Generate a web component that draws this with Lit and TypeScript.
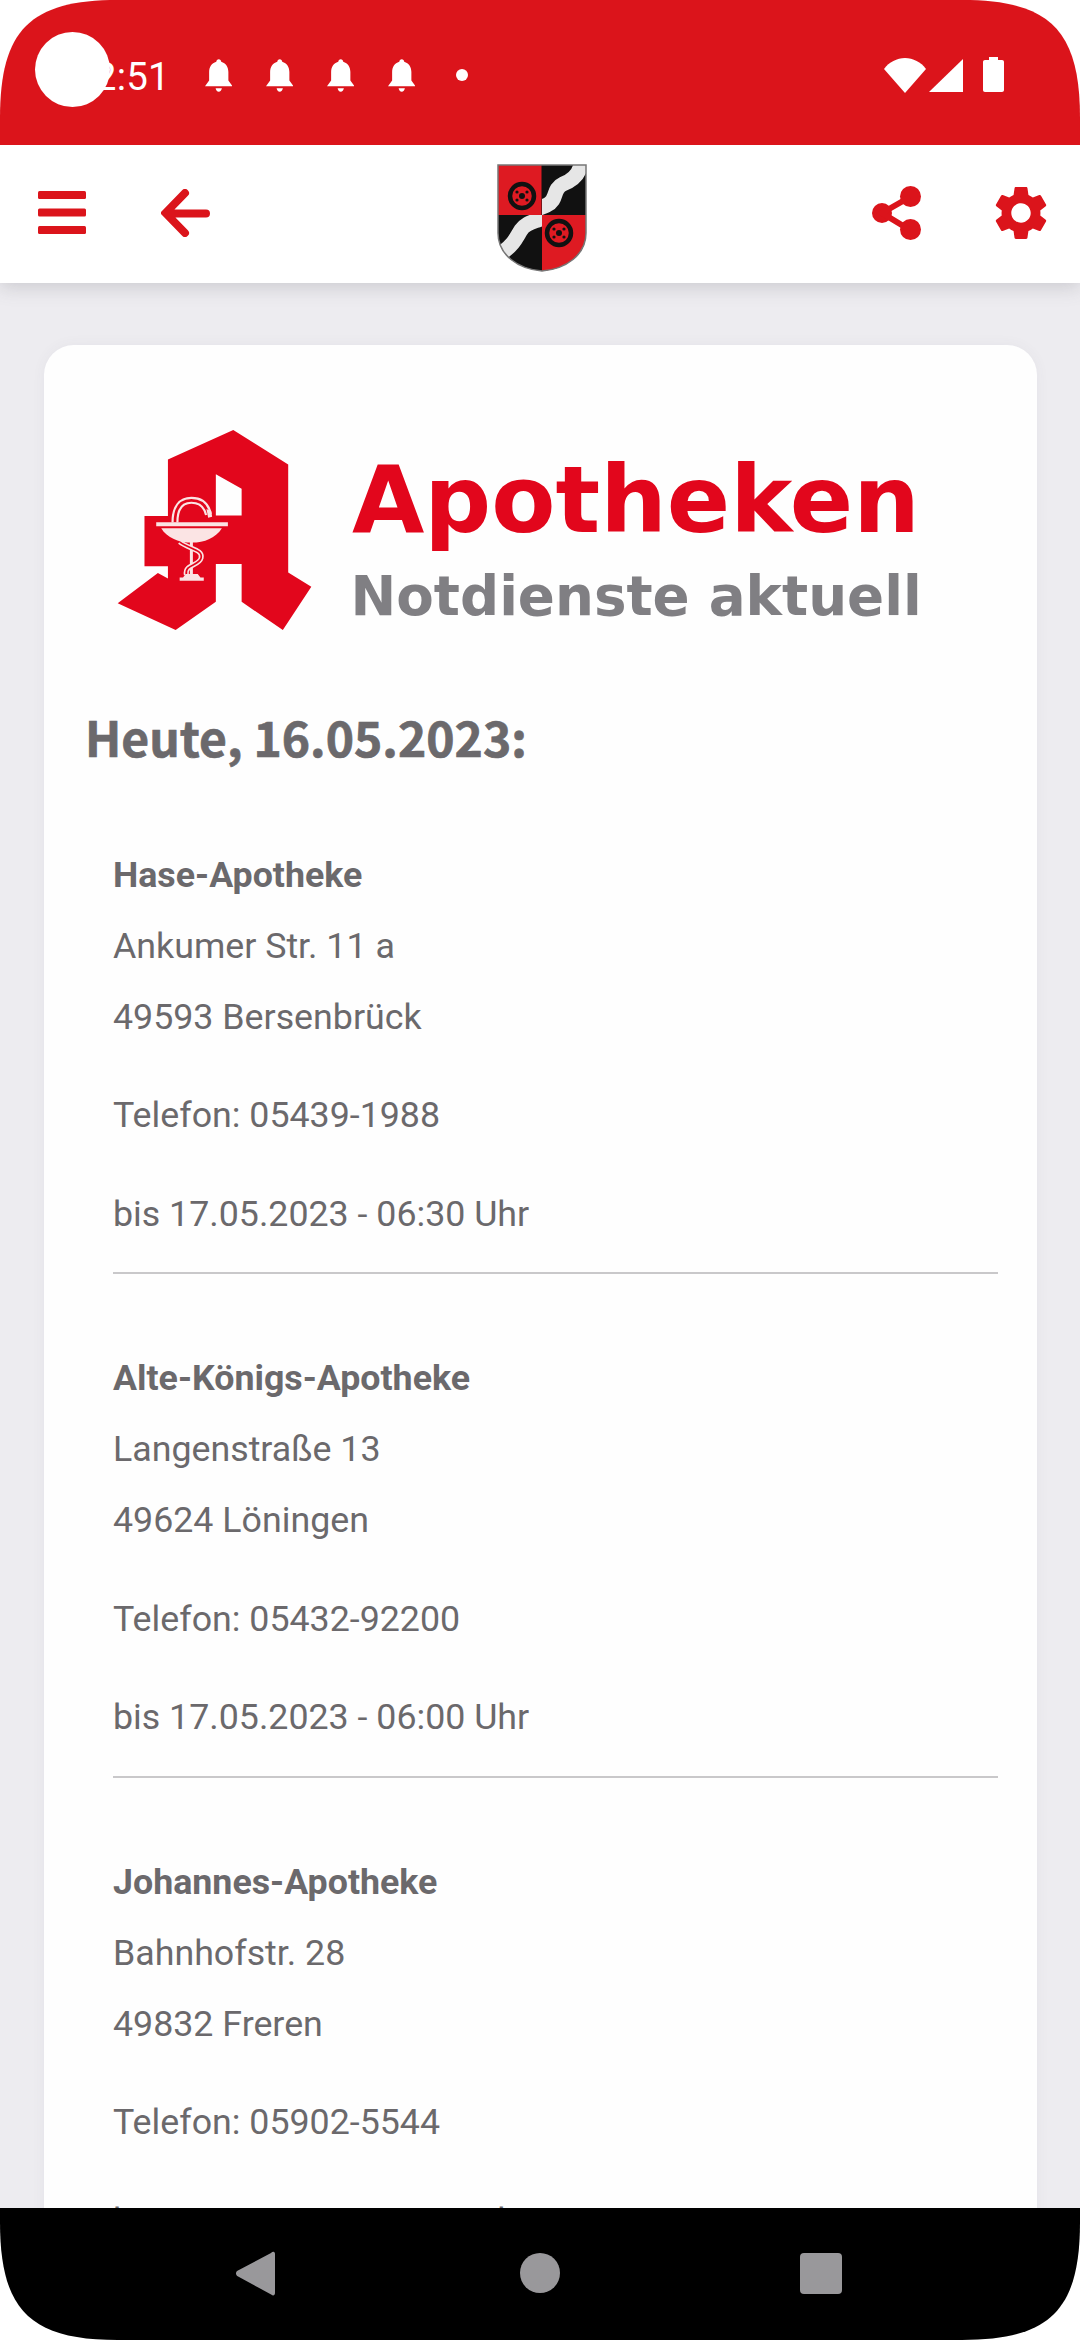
import { LitElement, html, css, svg } from "lit";
import { customElement } from "lit/decorators.js";

const pharmacies = [
  { name: "Hase-Apotheke", street: "Ankumer Str. 11 a", city: "49593 Bersenbrück", phone: "05439-1988", until: "17.05.2023 - 06:30 Uhr" },
  { name: "Alte-Königs-Apotheke", street: "Langenstraße 13", city: "49624 Löningen", phone: "05432-92200", until: "17.05.2023 - 06:00 Uhr" },
  { name: "Johannes-Apotheke", street: "Bahnhofstr. 28", city: "49832 Freren", phone: "05902-5544", until: "17.05.2023 - 06:00 Uhr" },
];

const bell = html`<svg class="bell" viewBox="0 0 28 33"><path fill="#fff" d="M14 0c1.400 0 2.400 1 2.500 2.600C21.300 4 23.800 8.200 23.800 13v8.500L28 27.500H0l4.200-6V13c0-4.800 2.500-9 7.300-10.400C11.600 1 12.600 0 14 0zM10.800 29.500h6.400c-.3 2-1.600 3.500-3.200 3.500s-2.900-1.500-3.200-3.500z"/></svg>`;

const wheel = (cx: number, cy: number) => svg`
  <circle cx=${cx} cy=${cy} r="12" fill="none" stroke="#111" stroke-width="4.500"/>
  <circle cx=${cx} cy=${cy} r="3" fill="#111"/>
  <circle cx=${cx - 5} cy=${cy - 4} r="1.600" fill="#111"/>
  <circle cx=${cx + 5} cy=${cy - 4} r="1.600" fill="#111"/>
  <circle cx=${cx - 5} cy=${cy + 4} r="1.600" fill="#111"/>
  <circle cx=${cx + 5} cy=${cy + 4} r="1.600" fill="#111"/>`;

@customElement("app-root")
export class AppRoot extends LitElement {
  static styles = css`
    :host { display: block; width: 1080px; height: 2340px; background: #fff; font-family: Roboto, sans-serif; }
    .phone { width: 1080px; height: 2340px; display: flex; flex-direction: column; overflow: hidden; position: relative; clip-path: path("M0 118C0 30 30 0 118 0H962C1050 0 1080 30 1080 118V2222C1080 2310 1050 2340 962 2340H118C30 2340 0 2310 0 2222Z"); }
    .status { height: 145px; flex: none; background: #db141b; display: flex; align-items: flex-start; position: relative; z-index: 3; color: #fff; }
    .time { font-size: 38.5px; line-height: 45px; margin: 54px 0 0 73px; width: 132px; letter-spacing: .2px; }
    .bells { display: flex; gap: 33.500px; margin: 59px 0 0 -.5px; }
    .bell { width: 27.500px; height: 33px; display: block; }
    .dot { width: 12px; height: 12px; border-radius: 50%; background: #fff; margin: 69px 0 0 41px; }
    .sys { display: flex; margin: 57px 0 0 auto; padding-right: 76px; align-items: flex-start; }
    .wifi { width: 42px; height: 35px; display: block; margin-top: 1px; }
    .signal { width: 34px; height: 33px; display: block; margin: 2px 0 0 3px; }
    .batt { width: 21px; height: 35px; display: block; margin-left: 20px; }
    .camera { position: absolute; left: 35px; top: 32px; width: 75px; height: 75px; border-radius: 50%; background: #fff; z-index: 4; }

    .toolbar { height: 138px; flex: none; box-sizing: border-box; padding-bottom: 3px; background: #fff; display: flex; align-items: center; position: relative; z-index: 2; box-shadow: 0 4px 18px rgba(90, 90, 100, .24); }
    .toolbar svg { display: block; flex: none; }
    .menu { width: 48px; height: 43px; margin-left: 38px; }
    .back { width: 49px; height: 48px; margin-left: 74.500px; }
    .crest { width: 90px; height: 108px; margin-left: 287px; margin-top: 10px; }
    .share { width: 49px; height: 54px; margin-left: 285px; }
    .gear { width: 54px; height: 54px; margin-left: 73px; }

    .content { flex: 1; min-height: 0; overflow: hidden; background: #edecf0; padding: 62px 43px 0 44px; }
    .card { background: #fefefe; border-radius: 30px; padding: 85px 41px 0 42px; box-sizing: border-box; height: 2000px; box-shadow: 0 0 14px rgba(80, 80, 90, .05); }
    .logo { display: flex; margin-left: 31px; align-items: flex-start; }
    .mark { width: 195px; height: 200px; display: block; flex: none; }
    .words { margin: 0 0 0 38.500px; color: #e2061c; font-family: "DejaVu Sans", sans-serif; font-weight: 700; white-space: nowrap; }
    .w1 { font-size: 93.500px; line-height: 100px; margin: 19.500px 0 0 1.500px; }
    .w2 { font-size: 54.700px; line-height: 60px; margin: 16.500px 0 0 0; color: #807f83; }

    h1 { margin: 71px 0 0 -1px; font-family: "Noto Sans CJK SC", "Noto Sans", sans-serif; font-weight: 700; font-size: 48px; line-height: 70px; color: #6b696c; -webkit-text-stroke: .7px #6b696c; }
    .entry { margin: 0 -2px 0 27px; color: #6b696c; font-size: 35.750px; line-height: 71px; }
    .entry p { margin: 0; }
    .name { font-weight: 700; }
    .gap { margin-top: 27.500px !important; }
    .rule { height: 2px; background: #c9c8ca; margin-top: 22.500px; }
    .first { padding-top: 68.500px; }
    .next { padding-top: 69px; }

    .nav { height: 132px; flex: none; background: #000; position: relative; z-index: 3; display: flex; align-items: center; }
    .nav svg, .nav div { flex: none; display: block; }
    .tri { width: 39px; height: 45px; margin-left: 236px; margin-top: -2px; }
    .circ { width: 40px; height: 40px; border-radius: 50%; background: #99989b; margin-left: 245px; margin-top: -2px; }
    .sq { width: 42px; height: 41px; border-radius: 4px; background: #99989b; margin-left: 240px; margin-top: -1px; }
  `;

  render() {
    return html`<div class="phone">
      <div class="status">
        <div class="time">12:51</div>
        <div class="bells">${bell}${bell}${bell}${bell}</div>
        <div class="dot"></div>
        <div class="sys">
          <svg class="wifi" viewBox="0 0 42 35"><path fill="#fff" d="M0 11C5 4 13 0 21 0s16 4 21 11L21 35z"/></svg>
          <svg class="signal" viewBox="0 0 34 33"><path fill="#fff" d="M34 0v33H0z"/></svg>
          <svg class="batt" viewBox="0 0 21 35"><path fill="#fff" d="M6 0h9v3h4c1.200 0 2 .8 2 2v28c0 1.200-.8 2-2 2H2c-1.200 0-2-.8-2-2V5c0-1.200.8-2 2-2h4z"/></svg>
        </div>
        <div class="camera"></div>
      </div>

      <div class="toolbar">
        <svg class="menu" viewBox="0 0 48 43"><g fill="#db141b"><rect width="48" height="8" rx="1.500"/><rect y="17.500" width="48" height="8" rx="1.500"/><rect y="35" width="48" height="8" rx="1.500"/></g></svg>
        <svg class="back" viewBox="0 0 49 48"><path fill="none" stroke="#db141b" stroke-width="8" stroke-linecap="round" stroke-linejoin="miter" d="M45 24.500H6M24 4L4.500 24 24 44"/></svg>
        <svg class="crest" viewBox="0 0 90 108">
          <defs>
            <clipPath id="shield"><path d="M1 1h88v68c0 22-20 36-44 38C21 105 1 91 1 69z"/></clipPath>
            <clipPath id="tr"><rect x="45" y="0" width="45" height="51"/></clipPath>
            <clipPath id="bl"><rect x="0" y="51" width="45" height="57"/></clipPath>
          </defs>
          <g clip-path="url(#shield)">
            <rect width="90" height="108" fill="#111"/>
            <rect width="44.500" height="51" fill="#de1a22"/>
            <rect x="45" y="51" width="45" height="57" fill="#de1a22"/>
            <path clip-path="url(#tr)" fill="none" stroke="#e6e6e6" stroke-width="15" d="M84 0C82 12 74 17 66 20 55 25 61 36 50 41 46 43 42 44 38 46"/>
            <path clip-path="url(#bl)" fill="none" stroke="#e6e6e6" stroke-width="15" d="M50 52C40 58 30 57 24 66 19 74 17 80 6 88"/>
            ${wheel(25, 32)}${wheel(62, 69)}
          </g>
          <path fill="none" stroke="#777" stroke-width="1.500" d="M1 1h88v68c0 22-20 36-44 38C21 105 1 91 1 69z"/>
        </svg>
        <svg class="share" viewBox="0 0 49 54"><g fill="#db141b"><circle cx="38.500" cy="10.500" r="10.500"/><circle cx="10" cy="27" r="10"/><circle cx="38.500" cy="43.500" r="10.500"/></g><path fill="none" stroke="#db141b" stroke-width="6" d="M38 11L10 27l28 17"/></svg>
        <svg class="gear" viewBox="2 2 20 20"><path fill="#db141b" d="M19.140 12.940c.04-.3.06-.61.06-.94 0-.32-.02-.64-.07-.94l2.030-1.580c.18-.14.23-.41.12-.61l-1.920-3.320c-.12-.22-.37-.29-.59-.22l-2.390.96c-.5-.38-1.030-.7-1.620-.94l-.36-2.540c-.04-.24-.24-.41-.48-.41h-3.840c-.24 0-.43.17-.47.41l-.36 2.540c-.59.24-1.130.57-1.620.94l-2.390-.96c-.22-.08-.47 0-.59.22L2.740 8.870c-.12.21-.08.47.12.61l2.030 1.580c-.05.3-.09.63-.09.94s.02.64.07.94l-2.030 1.580c-.18.14-.23.41-.12.61l1.920 3.320c.12.22.37.29.59.22l2.390-.96c.5.38 1.030.7 1.620.94l.36 2.540c.05.24.24.41.48.41h3.840c.24 0 .44-.17.47-.41l.36-2.540c.59-.24 1.130-.56 1.620-.94l2.390.96c.22.08.47 0 .59-.22l1.920-3.320c.12-.22.07-.47-.12-.61l-2.010-1.580zM12 15.600c-1.980 0-3.600-1.620-3.600-3.600s1.620-3.600 3.600-3.600 3.600 1.620 3.600 3.600-1.620 3.600-3.600 3.600z"/></svg>
      </div>

      <div class="content">
        <div class="card">
          <div class="logo">
            <svg class="mark" viewBox="85 90 578 597">
              <path fill-rule="evenodd" fill="#e2061c" d="M430 90L594 193V515L663 558 578 687 455 603V490H378V603L258 687 85 607 205 517 235 533V497H165V347H235V178zM378 222V345H455V265z"/>
              <g fill="none" stroke-linecap="butt">
                <path stroke="#fbe4e4" stroke-width="21" d="M256 366C256 322 274 300 305 300 334 300 350 316 356 342"/>
                <path stroke="#e2061c" stroke-width="8" d="M256 366C256 322 274 300 305 300 334 300 350 316 356 342"/>
                <path stroke="#fbe4e4" stroke-width="12" d="M200 371H414"/>
                <path stroke="#fbe4e4" stroke-width="9" d="M305 422V528"/>
                <path stroke="#fbe4e4" stroke-width="15" d="M270 424C298 446 340 446 334 472 328 496 284 490 290 522"/>
                <path stroke="#e2061c" stroke-width="5" d="M270 424C298 446 340 446 334 472 328 496 284 490 290 522"/>
              </g>
              <path fill="#fbe4e4" d="M350 326l14 6 3 17-12 3z"/>
              <path fill="#fbe4e4" d="M215 383H396C378 412 344 426 306 426S232 412 215 383z"/>
              <path fill="#fbe4e4" d="M270 530H342V540H270zM288 520H324L332 530H280z"/>
            </svg>
            <div class="words">
              <div class="w1">Apotheken</div>
              <div class="w2">Notdienste aktuell</div>
            </div>
          </div>
          <h1>Heute, 16.05.2023:</h1>
          ${pharmacies.map((p, i) => html`<div class="entry ${i === 0 ? "first" : "next"}">
            <p class="name">${p.name}</p>
            <p>${p.street}</p>
            <p>${p.city}</p>
            <p class="gap">Telefon: ${p.phone}</p>
            <p class="gap">bis ${p.until}</p>
            ${i < 2 ? html`<div class="rule"></div>` : ""}
          </div>`)}
        </div>
      </div>

      <div class="nav">
        <svg class="tri" viewBox="0 0 39 45"><path fill="#99989b" d="M38 1c.6.4 1 1 1 2v39c0 2-1.800 3.500-3.400 1.800L1.200 25c-1.600-1.600-1.600-3.500-.2-5L35 2c1-1 2.200-1.600 3-1z"/></svg>
        <div class="circ"></div>
        <div class="sq"></div>
      </div>
    </div>`;
  }
}
